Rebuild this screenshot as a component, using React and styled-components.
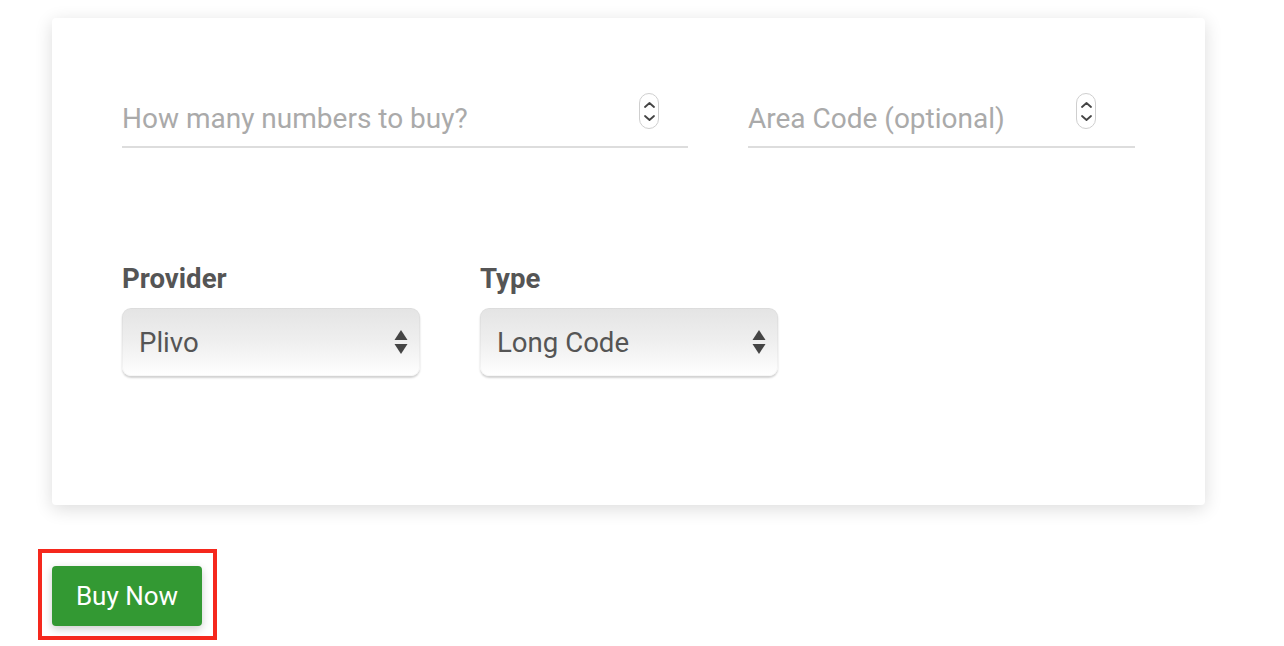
import React from "react"
import styled, { createGlobalStyle } from "styled-components"

const GlobalStyle = createGlobalStyle`
  html, body {
    margin: 0;
    padding: 0;
    background: #ffffff;
    font-family: Roboto, "Liberation Sans", sans-serif;
  }
`

const StyledPage = styled.div`
  padding: 18px 79px 0 52px;
`

const StyledCard = styled.div`
  background: #ffffff;
  border-radius: 4px;
  box-shadow: 0px 4px 18px 0px rgba(0, 0, 0, 0.14);
  padding: 72px 70px 129px 70px;
`

const StyledInputsRow = styled.div`
  display: grid;
  grid-template-columns: 566px 387px;
  column-gap: 60px;
`

const StyledField = styled.div`
  position: relative;
  height: 56px;
  border-bottom: 2px solid #dddddd;
`

const StyledInput = styled.input`
  width: 100%;
  height: 100%;
  box-sizing: border-box;
  border: none;
  outline: none;
  background: transparent;
  padding: 0 50px 0 0;
  font-family: Roboto, "Liberation Sans", sans-serif;
  font-size: 28px;
  color: #555555;

  &::placeholder {
    color: #aaaaaa;
  }
`

const StyledSpinner = styled.div`
  position: absolute;
  top: 3px;
  right: ${(p) => p.$right}px;
  width: 18px;
  height: 34px;
  border: 1px solid #cfcfcf;
  border-radius: 10px;
  display: flex;
  flex-direction: column;
  align-items: center;
  justify-content: center;
  gap: 7px;
  background: #ffffff;
`

const StyledSelectsRow = styled.div`
  display: flex;
  gap: 60px;
  margin-top: 116px;
`

const StyledSelectGroup = styled.div`
  display: flex;
  flex-direction: column;
`

const StyledLabel = styled.label`
  font-size: 27.6px;
  font-weight: 700;
  color: #555555;
  line-height: 30px;
  margin-bottom: 14px;
`

const StyledSelect = styled.div`
  width: 298px;
  height: 68px;
  box-sizing: border-box;
  border-radius: 9px;
  background: linear-gradient(to bottom, #e4e4e4 0%, #efefef 50%, #ffffff 100%);
  box-shadow: 0px 2px 2px rgba(0, 0, 0, 0.18), inset 0 0 0 1px rgba(0, 0, 0, 0.03);
  display: flex;
  align-items: center;
  justify-content: space-between;
  padding: 0 12px 0 17px;
  font-size: 27.6px;
  color: #555555;
`

const StyledActions = styled.div`
  margin: 44px 0 0 -14px;
  display: inline-block;
  border: 4px solid #f5281d;
  padding: 13px 11px 10px 10px;
`

const StyledButton = styled.button`
  display: block;
  width: 150px;
  height: 60px;
  border: none;
  border-radius: 4px;
  background: #339933;
  color: #ffffff;
  font-family: Roboto, "Liberation Sans", sans-serif;
  font-size: 26px;
  font-weight: 400;
  box-shadow: 0px 3px 8px rgba(0, 0, 0, 0.2);
  cursor: pointer;
`

const Chevrons = () => (
  <>
    <svg width="11" height="6" viewBox="0 0 11 6">
      <path d="M1 5 L5.5 1 L10 5" fill="none" stroke="#444" strokeWidth="1.8" strokeLinecap="round" strokeLinejoin="round" />
    </svg>
    <svg width="11" height="6" viewBox="0 0 11 6">
      <path d="M1 1 L5.5 5 L10 1" fill="none" stroke="#444" strokeWidth="1.8" strokeLinecap="round" strokeLinejoin="round" />
    </svg>
  </>
)

const Arrows = () => (
  <svg width="14" height="26" viewBox="0 0 14 26">
    <path d="M7 1 L13.5 11 L0.5 11 Z" fill="#444" />
    <path d="M7 25 L13.5 15 L0.5 15 Z" fill="#444" />
  </svg>
)

const NumberField = ({ placeholder, spinRight }) => (
  <StyledField>
    <StyledInput type="text" placeholder={placeholder} />
    <StyledSpinner $right={spinRight}>
      <Chevrons />
    </StyledSpinner>
  </StyledField>
)

const SelectField = ({ label, value }) => (
  <StyledSelectGroup>
    <StyledLabel>{label}</StyledLabel>
    <StyledSelect>
      <span>{value}</span>
      <Arrows />
    </StyledSelect>
  </StyledSelectGroup>
)

const App = () => (
  <>
    <GlobalStyle />
    <StyledPage>
      <StyledCard>
        <StyledInputsRow>
          <NumberField placeholder="How many numbers to buy?" spinRight={29} />
          <NumberField placeholder="Area Code (optional)" spinRight={39} />
        </StyledInputsRow>
        <StyledSelectsRow>
          <SelectField label="Provider" value="Plivo" />
          <SelectField label="Type" value="Long Code" />
        </StyledSelectsRow>
      </StyledCard>
      <StyledActions>
        <StyledButton>Buy Now</StyledButton>
      </StyledActions>
    </StyledPage>
  </>
)

export default App
